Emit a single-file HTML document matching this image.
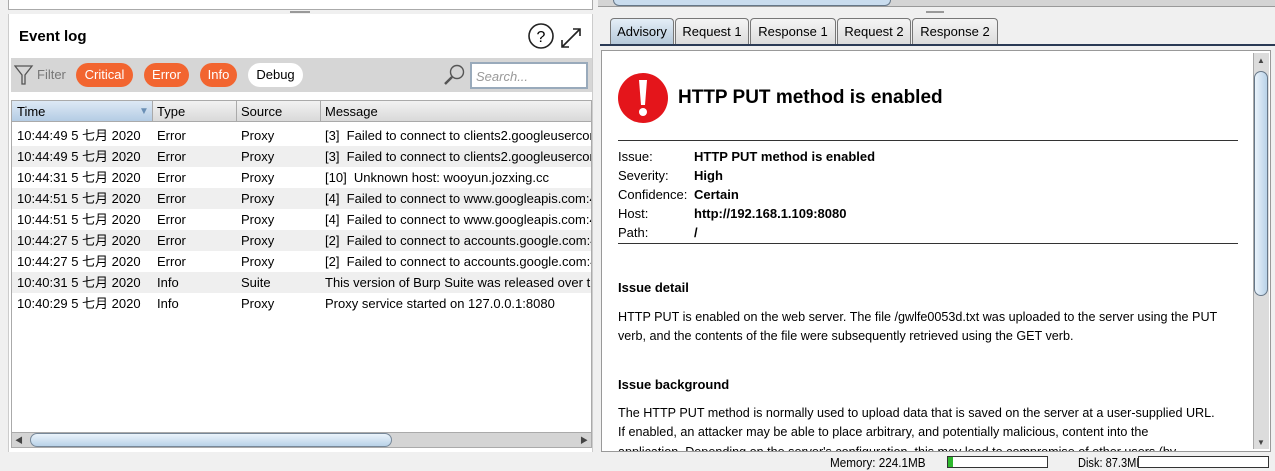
<!DOCTYPE html>
<html><head><meta charset="utf-8"><style>
*{margin:0;padding:0;box-sizing:border-box}
body{width:1275px;height:471px;overflow:hidden;background:#f0f0f0;font-family:"Liberation Sans","Noto Sans CJK SC",sans-serif;font-size:13px;color:#000;position:relative}
.a{position:absolute;white-space:nowrap}
.pill{position:absolute;top:63px;height:24px;border-radius:12px;background:#f26530;color:#fff;text-align:center;line-height:24px;font-size:13px}
.row{position:absolute;left:12px;width:580px;height:21px;line-height:21px}
.row span{position:absolute}
.tab{position:absolute;top:18px;height:26px;border:1px solid #777;border-bottom:none;border-radius:4px 4px 0 0;background:linear-gradient(#f4f4f4,#dcdcdc);text-align:center;line-height:25px}
.lbl{position:absolute;left:618px}
.val{position:absolute;left:694px;font-weight:bold}
</style></head><body>
<div class="a" style="left:8px;top:0;width:585px;height:10px;border:1px solid #aaa;border-top:none;background:#fff"></div>
<div class="a" style="left:290px;top:11px;width:20px;height:2px;background:#999"></div>
<div class="a" style="left:8px;top:14px;width:585px;height:438px;background:#fff;border-left:1px solid #ccc;border-right:1px solid #ccc"></div>
<div class="a" style="left:19px;top:28px;font-weight:bold;font-size:15px">Event log</div>
<svg class="a" style="left:527px;top:22px" width="62" height="30" viewBox="0 0 62 30">
<circle cx="14" cy="14" r="12" fill="none" stroke="#222" stroke-width="1.6"/>
<text x="14" y="20" font-size="16" text-anchor="middle" font-family="Liberation Sans">?</text>
<path d="M35 25 L53 7 M46 7 L53 7 L53 14 M35 18 L35 25 L42 25" fill="none" stroke="#222" stroke-width="1.6"/>
</svg>
<div class="a" style="left:11px;top:58px;width:581px;height:34px;background:#d6d6d6"></div>
<svg class="a" style="left:14px;top:64px" width="20" height="22"><path d="M1 2 L18 2 L11 11 L11 20 L8 20 L8 11 Z" fill="none" stroke="#555" stroke-width="1.3"/></svg>
<div class="a" style="left:37px;top:67px;color:#777">Filter</div>
<div class="pill" style="left:76px;width:57px">Critical</div>
<div class="pill" style="left:144px;width:45px">Error</div>
<div class="pill" style="left:200px;width:37px">Info</div>
<div class="pill" style="left:248px;width:55px;background:#fff;color:#000">Debug</div>
<svg class="a" style="left:442px;top:63px" width="24" height="24"><circle cx="15" cy="9" r="6.5" fill="none" stroke="#555" stroke-width="1.4"/><path d="M10 14 L3 21" stroke="#555" stroke-width="2.5"/></svg>
<div class="a" style="left:470px;top:62px;width:118px;height:27px;border:2px solid #9ab;background:#fff;color:#999;font-style:italic;padding:4px 4px;line-height:17px">Search...</div>
<div class="a" style="left:11px;top:100px;width:581px;height:22px;background:linear-gradient(#f2f2f2,#d9d9d9);border:1px solid #aaa"></div>
<div class="a" style="left:12px;top:101px;width:140px;height:20px;background:linear-gradient(#dde9f5,#b4cce4)"></div>
<div class="a" style="left:17px;top:104px">Time</div>
<div class="a" style="left:139px;top:106px;color:#6a8fb5;font-size:10px">▼</div>
<div class="a" style="left:152px;top:101px;width:1px;height:20px;background:#aaa"></div>
<div class="a" style="left:157px;top:104px">Type</div>
<div class="a" style="left:236px;top:101px;width:1px;height:20px;background:#aaa"></div>
<div class="a" style="left:241px;top:104px">Source</div>
<div class="a" style="left:320px;top:101px;width:1px;height:20px;background:#aaa"></div>
<div class="a" style="left:325px;top:104px">Message</div>
<div class="a" style="left:11px;top:122px;width:581px;height:310px;border-left:1px solid #aaa;border-right:1px solid #aaa;overflow:hidden">
<div class="row" style="top:3px;left:0"><span style="left:5px">10:44:49 5 七月 2020</span><span style="left:145px">Error</span><span style="left:229px">Proxy</span><span style="left:313px">[3]&nbsp; Failed to connect to clients2.googleusercontent.com</span></div>
<div class="row" style="top:24px;left:0;background:#efefef"><span style="left:5px">10:44:49 5 七月 2020</span><span style="left:145px">Error</span><span style="left:229px">Proxy</span><span style="left:313px">[3]&nbsp; Failed to connect to clients2.googleusercontent.com</span></div>
<div class="row" style="top:45px;left:0"><span style="left:5px">10:44:31 5 七月 2020</span><span style="left:145px">Error</span><span style="left:229px">Proxy</span><span style="left:313px">[10]&nbsp; Unknown host: wooyun.jozxing.cc</span></div>
<div class="row" style="top:66px;left:0;background:#efefef"><span style="left:5px">10:44:51 5 七月 2020</span><span style="left:145px">Error</span><span style="left:229px">Proxy</span><span style="left:313px">[4]&nbsp; Failed to connect to www.googleapis.com:443</span></div>
<div class="row" style="top:87px;left:0"><span style="left:5px">10:44:51 5 七月 2020</span><span style="left:145px">Error</span><span style="left:229px">Proxy</span><span style="left:313px">[4]&nbsp; Failed to connect to www.googleapis.com:443</span></div>
<div class="row" style="top:108px;left:0;background:#efefef"><span style="left:5px">10:44:27 5 七月 2020</span><span style="left:145px">Error</span><span style="left:229px">Proxy</span><span style="left:313px">[2]&nbsp; Failed to connect to accounts.google.com:443</span></div>
<div class="row" style="top:129px;left:0"><span style="left:5px">10:44:27 5 七月 2020</span><span style="left:145px">Error</span><span style="left:229px">Proxy</span><span style="left:313px">[2]&nbsp; Failed to connect to accounts.google.com:443</span></div>
<div class="row" style="top:150px;left:0;background:#efefef"><span style="left:5px">10:40:31 5 七月 2020</span><span style="left:145px">Info</span><span style="left:229px">Suite</span><span style="left:313px">This version of Burp Suite was released over three months ago</span></div>
<div class="row" style="top:171px;left:0"><span style="left:5px">10:40:29 5 七月 2020</span><span style="left:145px">Info</span><span style="left:229px">Proxy</span><span style="left:313px">Proxy service started on 127.0.0.1:8080</span></div>
</div>
<div class="a" style="left:11px;top:432px;width:581px;height:16px;background:#d4d4d4;border:1px solid #aaa"></div>
<div class="a" style="left:15px;top:435px;font-size:8px;color:#444">◀</div>
<div class="a" style="left:580px;top:435px;font-size:8px;color:#444">▶</div>
<div class="a" style="left:30px;top:433px;width:362px;height:14px;border-radius:7px;background:linear-gradient(#eaf3fb,#b9d2e8);border:1px solid #789"></div>
<div class="a" style="left:598px;top:0;width:677px;height:7px;background:#d4d4d4;border-bottom:1px solid #999"></div>
<div class="a" style="left:613px;top:0;width:278px;height:6px;border-radius:0 0 6px 6px;background:#c9dcee;border:1px solid #678;border-top:none"></div>
<div class="a" style="left:926px;top:11px;width:18px;height:2px;background:#999"></div>
<div class="tab" style="left:610px;width:64px;background:linear-gradient(#e4eef7,#b6c9da)">Advisory</div>
<div class="tab" style="left:675px;width:74px">Request 1</div>
<div class="tab" style="left:750px;width:86px">Response 1</div>
<div class="tab" style="left:837px;width:74px">Request 2</div>
<div class="tab" style="left:912px;width:86px">Response 2</div>
<div class="a" style="left:600px;top:44px;width:675px;height:2px;background:#2a3a55"></div>
<div class="a" style="left:601px;top:50px;width:670px;height:402px;background:#fff;border:1px solid #999;overflow:hidden">
<svg class="a" style="left:15px;top:21px" width="52" height="52"><circle cx="26" cy="26" r="25" fill="#e4151b"/><path d="M22 8 L30 8 L28 33 L24 33 Z" fill="#fff"/><circle cx="26" cy="40" r="4" fill="#fff"/></svg>
<div class="a" style="left:76px;top:36px;font-weight:bold;font-size:19px">HTTP PUT method is enabled</div>
<div class="a" style="left:16px;top:89px;width:620px;height:1px;background:#333"></div>
<div class="a" style="left:16px;top:192px;width:620px;height:1px;background:#333"></div>
<div class="a" style="left:16px;top:229px;font-weight:bold">Issue detail</div>
<div class="a" style="left:16px;top:259px;font-size:12.6px">HTTP PUT is enabled on the web server. The file /gwlfe0053d.txt was uploaded to the server using the PUT</div>
<div class="a" style="left:16px;top:278px;font-size:12.6px">verb, and the contents of the file were subsequently retrieved using the GET verb.</div>
<div class="a" style="left:16px;top:326px;font-weight:bold">Issue background</div>
<div class="a" style="left:16px;top:355px;font-size:12.6px">The HTTP PUT method is normally used to upload data that is saved on the server at a user-supplied URL.</div>
<div class="a" style="left:16px;top:374px;font-size:12.6px">If enabled, an attacker may be able to place arbitrary, and potentially malicious, content into the</div>
<div class="a" style="left:16px;top:394px;font-size:12.6px">application. Depending on the server's configuration, this may lead to compromise of other users (by</div>
<div class="a" style="left:651px;top:2px;width:16px;height:396px;background:#dcdcdc;border-left:1px solid #aaa"></div>
<div class="a" style="left:655px;top:5px;font-size:8px;color:#444">▲</div>
<div class="a" style="left:655px;top:387px;font-size:8px;color:#444">▼</div>
<div class="a" style="left:652px;top:20px;width:14px;height:225px;border-radius:7px;background:linear-gradient(90deg,#eaf3fb,#b9d2e8);border:1px solid #678"></div>
</div>
<div class="lbl a" style="top:149px">Issue:</div><div class="val a" style="top:149px">HTTP PUT method is enabled</div>
<div class="lbl a" style="top:168px">Severity:</div><div class="val a" style="top:168px">High</div>
<div class="lbl a" style="top:187px">Confidence:</div><div class="val a" style="top:187px">Certain</div>
<div class="lbl a" style="top:206px">Host:</div><div class="val a" style="top:206px">http://192.168.1.109:8080</div>
<div class="lbl a" style="top:225px">Path:</div><div class="val a" style="top:225px">/</div>
<div class="a" style="left:830px;top:455px;font-size:13px;transform:scaleX(0.9);transform-origin:left">Memory: 224.1MB</div>
<div class="a" style="left:947px;top:456px;width:101px;height:12px;border:1px solid #333;background:#fff"><div style="width:5px;height:10px;background:#2eb82e"></div></div>
<div class="a" style="left:1078px;top:455px;font-size:13px;transform:scaleX(0.85);transform-origin:left">Disk: 87.3MB</div>
<div class="a" style="left:1138px;top:456px;width:131px;height:12px;border:1px solid #333;background:#fff"></div>
</body></html>
